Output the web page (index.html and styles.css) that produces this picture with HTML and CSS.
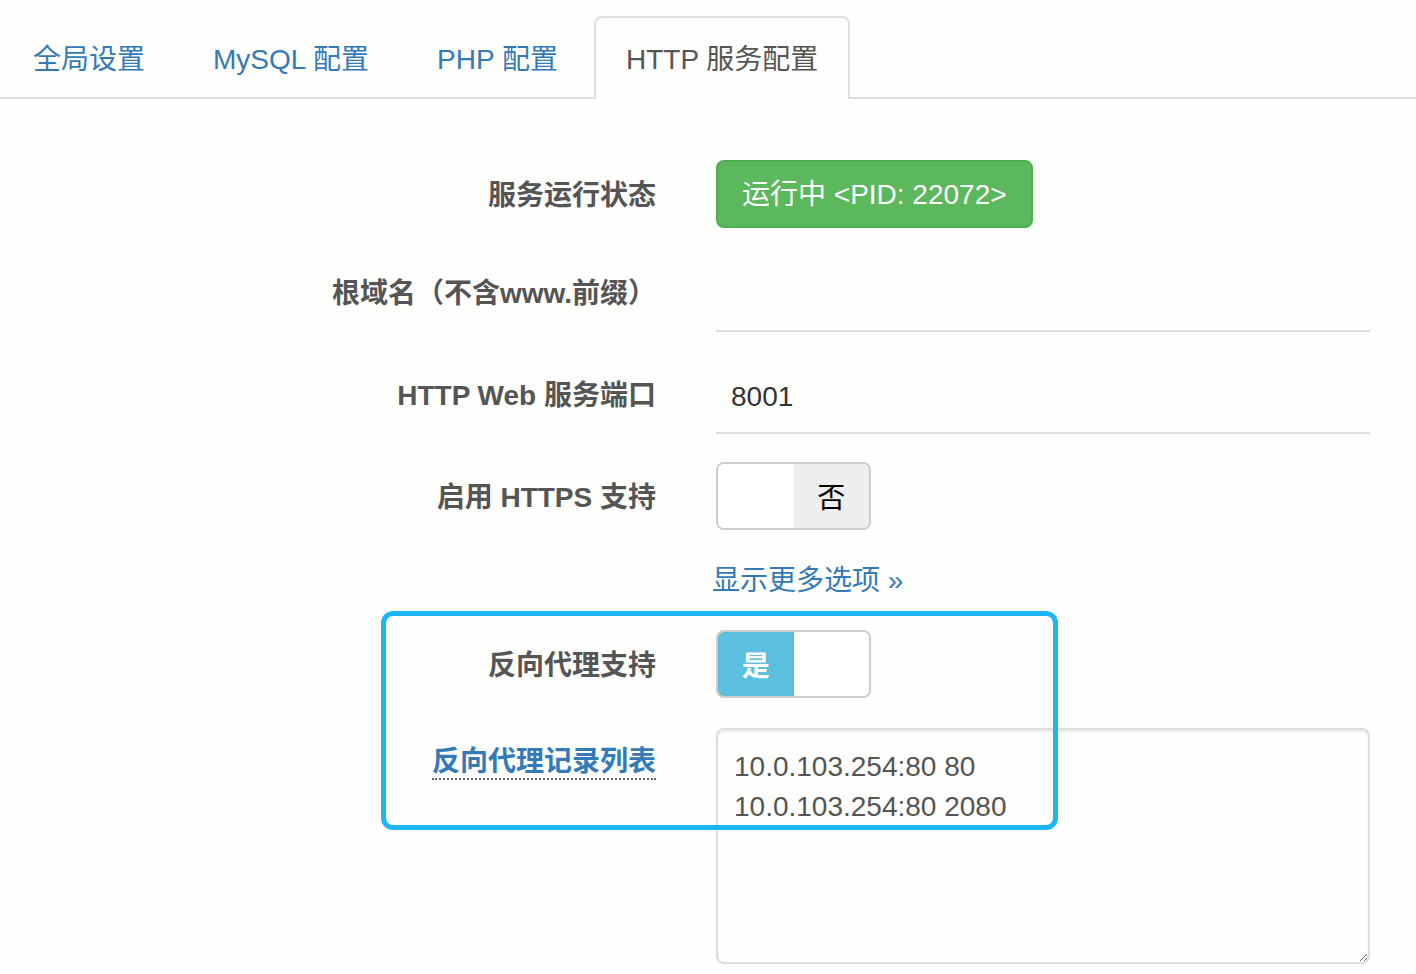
FILE: index.html
```html
<!DOCTYPE html>
<html lang="zh-CN">
<head>
<meta charset="utf-8">
<title>HTTP 服务配置</title>
<link rel="stylesheet" href="styles.css">
</head>
<body>
<ul class="tabs">
  <li class="tab"><a href="#">全局设置</a></li>
  <li class="tab"><a href="#">MySQL 配置</a></li>
  <li class="tab"><a href="#">PHP 配置</a></li>
  <li class="tab active"><a href="#">HTTP 服务配置</a></li>
</ul>
<form class="form">
  <div class="highlight"></div>

  <div class="row row-first">
    <label class="lbl">服务运行状态</label>
    <div class="ctl"><span class="btn-ok">运行中 &lt;PID: 22072&gt;</span></div>
  </div>

  <div class="row row-input">
    <label class="lbl">根域名（不含www.前缀）</label>
    <div class="ctl"><input class="line-input" type="text" value=""></div>
  </div>

  <div class="row row-input">
    <label class="lbl">HTTP Web 服务端口</label>
    <div class="ctl"><input class="line-input" type="text" value="8001"></div>
  </div>

  <div class="row row-input">
    <label class="lbl">启用 HTTPS 支持</label>
    <div class="ctl">
      <div class="switch"><span class="seg"></span><span class="seg off">否</span></div>
    </div>
  </div>

  <div class="row row-link">
    <span class="lbl"></span>
    <div class="ctl"><a class="more" href="#">显示更多选项 »</a></div>
  </div>

  <div class="row row-wide">
    <label class="lbl">反向代理支持</label>
    <div class="ctl">
      <div class="switch"><span class="seg on">是</span><span class="seg"></span></div>
    </div>
  </div>

  <div class="row row-wide">
    <label class="lbl lbl-link"><span class="dotted">反向代理记录列表</span></label>
    <div class="ctl"><textarea class="records">10.0.103.254:80 80
10.0.103.254:80 2080</textarea></div>
  </div>
</form>
</body>
</html>
```

FILE: styles.css
```css
html, body {
  margin: 0;
  padding: 0;
  background: #fefefc;
}

body {
  font-family: "Liberation Sans", "Noto Sans CJK SC", sans-serif;
  font-size: 28px;
  color: #333;
}

a {
  color: #337ab7;
  text-decoration: none;
}

.tabs {
  list-style: none;
  margin: 16px 0 0 0;
  padding: 0 0 0 1px;
  display: flex;
  border-bottom: 2px solid #ddd;
}

.tab {
  margin: 0 4px -2px 0;
}

.tab a {
  display: block;
  padding: 22px 30px 19px;
  line-height: 40px;
  border: 2px solid transparent;
  border-bottom: 0;
  border-radius: 8px 8px 0 0;
}

.tab.active a {
  color: #555;
  background: #fefefc;
  border-color: #ddd;
}

.form {
  position: relative;
  margin: 0;
  padding-top: 61px;
  display: flex;
  flex-direction: column;
}

.highlight {
  position: absolute;
  left: 381px;
  top: 512px;
  width: 677px;
  height: 219px;
  box-sizing: border-box;
  border: 5px solid #1db5fa;
  border-radius: 12px;
  z-index: 2;
  pointer-events: none;
}

.row {
  display: grid;
  grid-template-columns: 656px 654px;
  column-gap: 60px;
  align-items: start;
}

.row-input { margin-top: 28px; }
.row-first + .row-input { margin-top: 30px; }
.row-link { margin-top: 30px; }
.row-wide { margin-top: 30px; }

.lbl {
  box-sizing: border-box;
  height: 68px;
  padding-top: 4px;
  text-align: right;
  font-weight: bold;
  color: #555;
  line-height: 64px;
}

.lbl-link {
  display: flex;
  justify-content: flex-end;
  align-items: flex-start;
  padding-top: 18px;
  line-height: 32px;
}

.dotted {
  color: #337ab7;
  border-bottom: 2px dotted #666;
}

.btn-ok {
  display: inline-block;
  box-sizing: border-box;
  height: 68px;
  padding: 2px 24px 0;
  line-height: 62px;
  color: #fff;
  background: #5cb85c;
  border: 2px solid #4cae4c;
  border-radius: 8px;
}

.line-input {
  display: block;
  width: 100%;
  height: 74px;
  box-sizing: border-box;
  margin: 0;
  padding: 2px 15px 0;
  border: 0;
  border-bottom: 2px solid #ddd;
  background: transparent;
  font: inherit;
  color: #333;
  outline: none;
}

.switch {
  display: flex;
  width: 155px;
  height: 68px;
  box-sizing: border-box;
  border: 2px solid #ccc;
  border-radius: 8px;
  overflow: hidden;
  background: #fff;
}

.seg {
  flex: 1;
  display: flex;
  align-items: center;
  justify-content: center;
  background: #fff;
}

.seg.off {
  background: #eee;
  color: #000;
}

.seg.on {
  background: #5bc0de;
  color: #fff;
  font-weight: bold;
}

.row-link .lbl {
  height: 40px;
  padding-top: 2px;
  line-height: 38px;
}

.more {
  display: inline-block;
  box-sizing: border-box;
  height: 40px;
  padding-top: 2px;
  line-height: 38px;
  margin-left: -4px;
}

.records {
  display: block;
  width: 654px;
  height: 236px;
  box-sizing: border-box;
  margin: 0;
  padding: 17px 16px 15px;
  border: 2px solid #ddd;
  border-radius: 8px;
  box-shadow: inset 0 2px 2px rgba(0, 0, 0, 0.075);
  background: #fefefc;
  font: inherit;
  line-height: 40px;
  color: #555;
  resize: vertical;
  outline: none;
}
```
